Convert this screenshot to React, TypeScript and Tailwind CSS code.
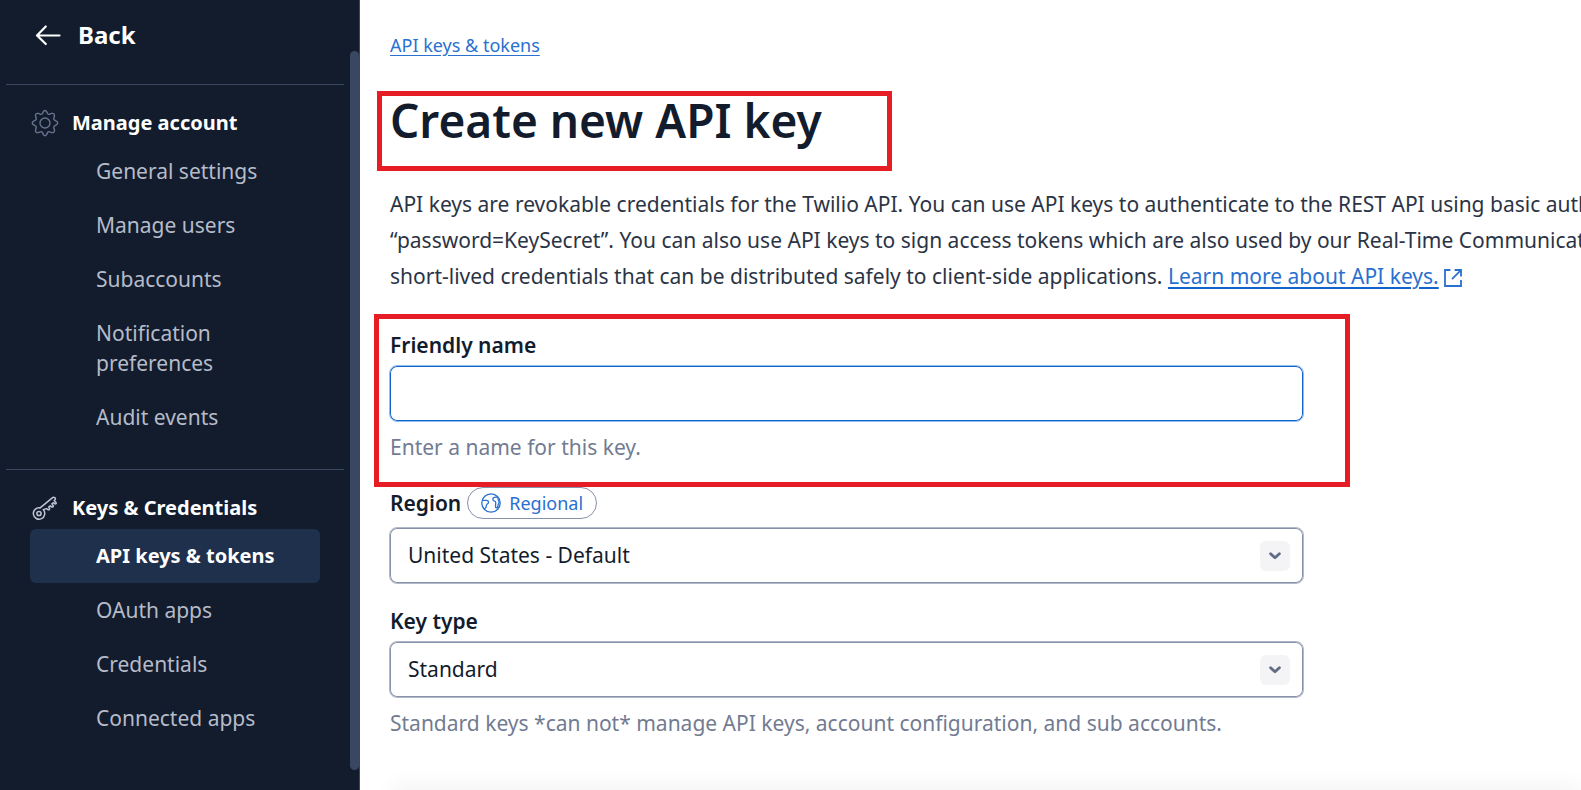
import { useState } from 'react';
import type { ReactNode } from 'react';

function ArrowLeftIcon() {
  return (
    <svg aria-hidden="true" viewBox="0 0 26 24" className="h-6 w-[26px]" fill="none" stroke="currentColor" strokeWidth="2.2" strokeLinecap="round" strokeLinejoin="round">
      <path d="M24.5 12.5H2M10.8 3.5 2 12.5l8.8 8.5" />
    </svg>
  );
}

function GearIcon() {
  return (
    <svg aria-hidden="true" viewBox="0 0 28 28" className="size-7 text-[#68748f]" fill="none" stroke="currentColor" strokeWidth="1.4" strokeLinejoin="round">
      <circle cx="14" cy="14" r="5" />
      <path d="M12.4 2.6Q14 .4 15.6 2.6L16.6 4.6Q17.4 5.8 18.8 5.2L20.6 4.4Q23.4 3.9 23.5 6.8L22.8 9.2Q22.3 10.6 23.6 11.2L25.6 12.3Q27.8 14 25.6 15.7L23.6 16.8Q22.3 17.4 22.8 18.8L23.5 21.2Q23.6 24.1 20.6 23.6L18.8 22.8Q17.4 22.2 16.6 23.4L15.6 25.6Q14 27.8 12.4 25.6L11.4 23.4Q10.6 22.2 9.2 22.8L7.4 23.6Q4.4 24.1 4.5 21.2L5.2 18.8Q5.7 17.4 4.4 16.8L2.4 15.7Q.2 14 2.4 12.3L4.4 11.2Q5.7 10.6 5.2 9.2L4.5 6.8Q4.4 3.9 7.4 4.4L9.2 5.2Q10.6 5.8 11.4 4.6Z" />
    </svg>
  );
}

function KeyIcon() {
  return (
    <svg aria-hidden="true" viewBox="0 0 28 28" className="size-7 text-[#c0c5d2]" fill="none" stroke="currentColor" strokeWidth="1.5" strokeLinejoin="round" strokeLinecap="round">
      <circle cx="8" cy="19.5" r="2.1" />
      <path d="M12.2 15.6a5.7 5.7 0 1 1-3.1-1.7L21.6 3.6q1-.8 2.1 0 1.1.9.5 1.8L23.2 6.5l1.8 2q.5 1.4-.9 1.5l-1.8-1.3-1.4 1.2 1.4 1.8q.3 1.5-1.4 1.4l-1.7-1.3-1.5 1.3.9 1.4q0 1.6-1.6 1.3l-1.4-1.2Z" />
    </svg>
  );
}

function GlobeIcon() {
  return (
    <svg aria-hidden="true" viewBox="0 0 20 20" className="size-5" fill="none" stroke="currentColor" strokeWidth="1.3" strokeLinejoin="round">
      <circle cx="10" cy="10" r="9.2" />
      <path d="M1.2 7.3h4q2.3.1 2.3 1.8 0 1.5-1.4 2.1-.9.5-.8 1.7.1 1.5-1.1 2.3l-1.1.9M17 4.4Q12 3.6 11.8 6.2q.1 1.7 1.8 2 1.2.3 1.2 1.6l-.3 3q-.1 2.1 1 2.1 1.2-.1 1.4-1.7.1-1.7.8-2.7.8-1.1.1-2.5-1-1.6-.8-3.4" />
    </svg>
  );
}

function ExternalIcon() {
  return (
    <svg aria-hidden="true" viewBox="0 0 18 18" className="inline size-[18px] align-[-3px]" fill="none" stroke="currentColor" strokeWidth="1.8" strokeLinecap="square">
      <path d="M5.5 1H1v16h16v-5M11.5 1H17v5.5M16.6 1.4 8.6 9.4" />
    </svg>
  );
}

function ChevronIcon() {
  return (
    <svg aria-hidden="true" viewBox="0 0 12 8" className="h-2 w-3" fill="none" stroke="currentColor" strokeWidth="2.8" strokeLinecap="round" strokeLinejoin="round">
      <path d="m1.6 1.8 4.4 4 4.4-4" />
    </svg>
  );
}

function NavSection({ icon, title, items, active }: { icon: ReactNode; title: string; items: string[]; active?: string }) {
  return (
    <section className="mr-[7px] ml-[6px] border-t border-[#394762] pt-[23px] pr-6 pb-[25px] pl-6">
      <h2 className="mb-[6px] flex items-center gap-[13px] pl-px text-xl leading-[30px] font-bold text-white">
        {icon}
        {title}
      </h2>
      <ul>
        {items.map((item) => (
          <li key={item}>
            <a
              href="#"
              aria-current={item === active ? 'page' : undefined}
              className={
                item === active
                  ? 'block rounded-md bg-[#1f304c] py-3 pr-6 pl-[66px] text-xl leading-[30px] font-bold text-white'
                  : 'block rounded-md py-3 pr-6 pl-[66px] text-[21px] leading-[30px] font-normal text-[#b6bbc9]'
              }
            >
              {item}
            </a>
          </li>
        ))}
      </ul>
    </section>
  );
}

function SelectField({ id, options }: { id: string; options: string[] }) {
  const [value, setValue] = useState(options[0]);
  return (
    <div className="relative">
      <select
        id={id}
        value={value}
        onChange={(e) => setValue(e.target.value)}
        className="block h-[57px] w-full appearance-none rounded-lg border border-[#b4b9c9] bg-white pr-14 pl-[18px] text-[21px] font-normal text-[#121c2d] inset-ring inset-ring-[#8891aa]"
      >
        {options.map((o) => (
          <option key={o}>{o}</option>
        ))}
      </select>
      <span className="pointer-events-none absolute inset-y-0 right-[14px] flex items-center">
        <span className="flex size-[30px] items-center justify-center rounded-md bg-[#f4f4f6] text-[#606b85]">
          <ChevronIcon />
        </span>
      </span>
    </div>
  );
}

export default function App() {
  const [name, setName] = useState('');
  return (
    <div className="flex h-screen overflow-hidden bg-white font-['Noto_Sans',sans-serif] text-[#121c2d]">
      <nav aria-label="Account" className="relative w-[360px] shrink-0 overflow-hidden border-r border-[#394762] bg-[#121c2d] pr-2">
        <a href="#" className="flex items-center gap-[17px] pt-5 pb-[34px] pl-[35px] text-2xl leading-[30px] font-bold text-white">
          <ArrowLeftIcon />
          Back
        </a>
        <NavSection
          icon={<GearIcon />}
          title="Manage account"
          items={['General settings', 'Manage users', 'Subaccounts', 'Notification preferences', 'Audit events']}
        />
        <NavSection
          icon={<KeyIcon />}
          title="Keys & Credentials"
          items={['API keys & tokens', 'OAuth apps', 'Credentials', 'Connected apps']}
          active="API keys & tokens"
        />
        <div className="absolute top-[51px] right-0 bottom-5 w-[9px] rounded-full bg-[#394762]" />
      </nav>

      <main className="flex min-w-0 flex-1 flex-col overflow-hidden pt-[33px]">
        <div className="pl-[30px]">
          <a href="#" className="block w-fit text-lg leading-6 text-[#2a70cf] underline underline-offset-3">
            API keys &amp; tokens
          </a>
          <div className="mt-[34px] -ml-[13px] w-[515px] max-w-full border-5 border-[#e71d25] pb-[22px] pl-2">
            <h1 className="text-[46px] leading-[48px] font-semibold">Create new API key</h1>
          </div>
          <p className="mt-[15px] text-[21px] leading-9 whitespace-nowrap text-[#2b3445]">
            API keys are revokable credentials for the Twilio API. You can use API keys to authenticate to the REST API using basic auth
            <br />
            “password=KeySecret”. You can also use API keys to sign access tokens which are also used by our Real-Time Communicat
            <br />
            short-lived credentials that can be distributed safely to client-side applications.{' '}
            <a href="#" className="text-[#2a70cf]">
              <span className="underline decoration-[#1263cc] decoration-2 underline-offset-3">Learn more about API keys.</span> <ExternalIcon />
            </a>
          </p>
        </div>

        <form onSubmit={(e) => e.preventDefault()} className="pl-[14px]">
          <div className="mt-5 w-[976px] max-w-full border-5 border-[#e71d25] pt-[11px] pr-[41px] pb-5 pl-[10px]">
            <label htmlFor="friendly-name" className="mb-[5px] block pl-px text-[21px] leading-[30px] font-semibold">
              Friendly name
            </label>
            <input
              id="friendly-name"
              type="text"
              value={name}
              aria-describedby="friendly-name-help"
              onChange={(e) => setName(e.target.value)}
              className="block h-[57px] w-full rounded-lg border border-[#8fbdf2] px-[18px] text-[21px] inset-ring inset-ring-[#1263cc] outline-none"
            />
            <p id="friendly-name-help" className="mt-[10px] pl-px text-[21px] leading-[30px] text-[#727b91]">
              Enter a name for this key.
            </p>
          </div>
          <div className="w-[930px] max-w-full pl-[15px]">
            <div className="mb-2 flex items-center gap-[6px] pl-px">
              <label htmlFor="region" className="text-[21px] leading-8 font-semibold">
                Region
              </label>
              <span className="flex h-8 items-center gap-2 rounded-full border border-[#8891aa] px-[13px] text-lg text-[#2a70cf]">
                <GlobeIcon />
                Regional
              </span>
            </div>
            <SelectField id="region" options={['United States - Default']} />
            <label htmlFor="key-type" className="mt-[22px] mb-[5px] block pl-px text-[21px] leading-[30px] font-semibold">
              Key type
            </label>
            <SelectField id="key-type" options={['Standard']} />
            <p className="mt-[10px] pl-px text-[21px] leading-[30px] text-[#727b91]">
              Standard keys *can not* manage API keys, account configuration, and sub accounts.
            </p>
          </div>
        </form>
        <div className="mt-auto -mb-1 ml-8 h-1 shrink-0 bg-white shadow-[0_0_20px_rgba(18,28,45,0.2)]" />
      </main>
    </div>
  );
}
